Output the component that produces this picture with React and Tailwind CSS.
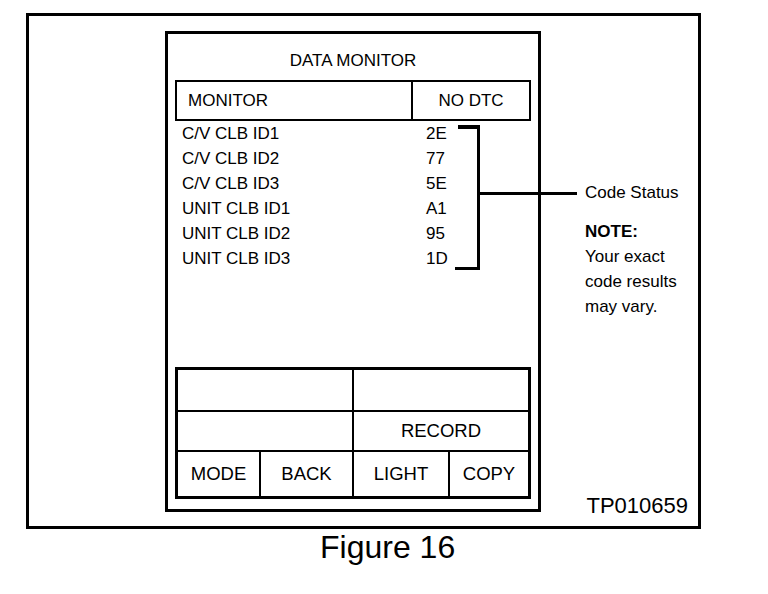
const rows = [
    { label: "C/V CLB ID1", value: "2E" },
    { label: "C/V CLB ID2", value: "77" },
    { label: "C/V CLB ID3", value: "5E" },
    { label: "UNIT CLB ID1", value: "A1" },
    { label: "UNIT CLB ID2", value: "95" },
    { label: "UNIT CLB ID3", value: "1D" },
];

const App = () => {
    return (
        <div className="w-[768px] h-[594px] bg-white text-black font-['Liberation_Sans',Arial,sans-serif] overflow-hidden">
            <div className="pt-[13px] pl-[26px]">
                <div className="relative flex w-[675px] h-[516px] border-[3px] border-black">
                    {/* device screen */}
                    <div className="ml-[136px] mt-[15px] w-[376px] h-[481px] border-[3px] border-black flex flex-col px-[7px] pb-[10px]">
                        <div className="pt-[17px] text-[17px] leading-[20px] text-center">DATA MONITOR</div>

                        <div className="mt-[9px] h-[41px] border-2 border-black flex text-[17px]">
                            <div className="flex-1 flex items-center pl-[11px]">MONITOR</div>
                            <div className="w-[118px] border-l-2 border-black flex items-center justify-center">NO DTC</div>
                        </div>

                        <div className="text-[17px] leading-[25px]">
                            {rows.map((row) => (
                                <div key={row.label} className="flex pl-[7px]">
                                    <span className="w-[244px]">{row.label}</span>
                                    <span>{row.value}</span>
                                </div>
                            ))}
                        </div>

                        <div className="flex-1" />

                        {/* soft keys */}
                        <div className="h-[132px] border-[3px] border-black flex flex-col text-[18.5px]">
                            <div className="h-[40px] flex">
                                <div className="w-[174px]" />
                                <div className="flex-1 border-l-2 border-black" />
                            </div>
                            <div className="h-[40px] flex border-t-2 border-black">
                                <div className="w-[174px]" />
                                <div className="flex-1 border-l-2 border-black flex items-center justify-center">RECORD</div>
                            </div>
                            <div className="h-[46px] flex border-t-2 border-black">
                                <div className="w-[81px] flex items-center justify-center">MODE</div>
                                <div className="w-[93px] border-l-2 border-black flex items-center justify-center">BACK</div>
                                <div className="w-[96px] border-l-2 border-black flex items-center justify-center">LIGHT</div>
                                <div className="flex-1 border-l-2 border-black flex items-center justify-center">COPY</div>
                            </div>
                        </div>
                    </div>

                    {/* callout text */}
                    <div className="flex-1 flex flex-col pl-[44px] pt-[164px] text-[17px] leading-[25px]">
                        <div>Code Status</div>
                        <div className="mt-[14px] font-bold">NOTE:</div>
                        <div>Your exact</div>
                        <div>code results</div>
                        <div>may vary.</div>
                        <div className="mt-auto self-end pr-[10px] pb-[9px] text-[22px] leading-none">TP010659</div>
                    </div>

                    {/* bracket and leader line */}
                    <svg className="absolute left-[426px] top-[109px]" width="125" height="146" viewBox="0 0 125 146">
                        <rect x="3" y="0" width="22" height="4" fill="black" />
                        <rect x="22" y="0" width="3" height="145" fill="black" />
                        <rect x="0" y="142" width="25" height="3" fill="black" />
                        <rect x="22" y="67" width="100" height="3" fill="black" />
                    </svg>
                </div>
                <div className="ml-[294px] mt-[2px] text-[32px] leading-none">Figure 16</div>
            </div>
        </div>
    );
};

export default App;
